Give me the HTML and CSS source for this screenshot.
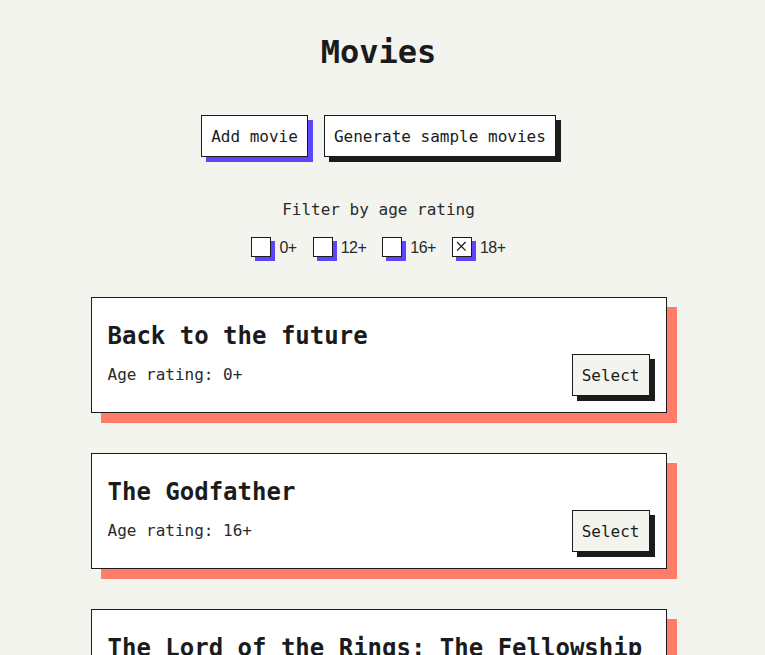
FILE: index.html
```html
<!DOCTYPE html>
<html lang="en">
<head>
<meta charset="utf-8">
<title>Movies</title>
<link rel="stylesheet" href="styles.css">
</head>
<body>
<main class="page">
  <h1 class="page-title">Movies</h1>
  <div class="actions">
    <button class="btn btn-purple">Add movie</button>
    <button class="btn btn-dark">Generate sample movies</button>
  </div>
  <p class="filter-title">Filter by age rating</p>
  <div class="filters">
    <label class="check"><span class="box"></span><span class="check-label">0+</span></label>
    <label class="check"><span class="box"></span><span class="check-label">12+</span></label>
    <label class="check"><span class="box"></span><span class="check-label">16+</span></label>
    <label class="check"><span class="box checked"><svg viewBox="0 0 20 20" width="18" height="18"><path d="M4.5 4.5 L14 14 M14 4.5 L4.5 14" stroke="#1b1b1b" stroke-width="1.4" fill="none"/></svg></span><span class="check-label">18+</span></label>
  </div>
  <section class="list">
    <article class="card">
      <h2 class="card-title">Back to the future</h2>
      <div class="card-row">
        <span class="rating">Age rating: 0+</span>
        <button class="btn btn-select">Select</button>
      </div>
    </article>
    <article class="card">
      <h2 class="card-title">The Godfather</h2>
      <div class="card-row">
        <span class="rating">Age rating: 16+</span>
        <button class="btn btn-select">Select</button>
      </div>
    </article>
    <article class="card">
      <h2 class="card-title">The Lord of the Rings: The Fellowship of the Ring</h2>
      <div class="card-row">
        <span class="rating">Age rating: 12+</span>
        <button class="btn btn-select">Select</button>
      </div>
    </article>
  </section>
</main>
</body>
</html>
```
FILE: styles.css
```css
html, body {
  margin: 0;
  padding: 0;
}
body {
  background: #f4f4ef;
  color: #1b1b1b;
  font-family: "DejaVu Sans Mono", "Liberation Mono", monospace;
  font-size: 16px;
  padding-right: 8px;
}
.page {
  width: 576px;
  margin: 0 auto;
  padding-top: 33px;
  display: flex;
  flex-direction: column;
  align-items: center;
}
.page-title {
  margin: 0;
  font-size: 32px;
  line-height: 38px;
  font-weight: bold;
}
.actions {
  margin-top: 44px;
  display: flex;
  gap: 16px;
}
.btn {
  font-family: inherit;
  font-size: 16px;
  color: #1b1b1b;
  background: #fff;
  border: 1px solid #1b1b1b;
  border-radius: 0;
  height: 42px;
  padding: 0 9px;
  cursor: pointer;
}
.btn-purple {
  box-shadow: 5px 5px 0 #5c46fb;
}
.btn-dark {
  box-shadow: 5px 5px 0 #1b1b1b;
}
.filter-title {
  margin: 43px 0 0;
  line-height: 19px;
  color: #2a2a2a;
}
.filters {
  margin-top: 18px;
  display: flex;
  gap: 16px;
  height: 20px;
}
.check {
  display: flex;
  align-items: center;
  gap: 8px;
  height: 20px;
  color: #2a2a2a;
}
.check-label {
  font-family: "Liberation Sans", Arial, sans-serif;
  font-size: 16px;
  letter-spacing: -0.5px;
  line-height: 20px;
  margin-top: 2px;
}
.box {
  width: 18px;
  height: 18px;
  border: 1px solid #1b1b1b;
  background: #fff;
  box-shadow: 4px 4px 0 #5c46fb;
  display: flex;
  align-items: center;
  justify-content: center;
}
.list {
  align-self: stretch;
  margin-top: 40px;
  display: flex;
  flex-direction: column;
  gap: 40px;
}
.card {
  background: #fff;
  border: 1px solid #1b1b1b;
  box-shadow: 10px 10px 0 #fe7c69;
  padding: 16px;
}
.card-title {
  margin: 8px 0 0;
  font-size: 24px;
  line-height: 29px;
  font-weight: bold;
  white-space: nowrap;
  overflow: hidden;
}
.card-row {
  margin-top: 3px;
  display: flex;
  justify-content: space-between;
  align-items: center;
}
.rating {
  color: #2a2a2a;
  margin-top: -2px;
}
.btn-select {
  background: #f4f4ef;
  box-shadow: 5px 5px 0 #1b1b1b;
}
```
